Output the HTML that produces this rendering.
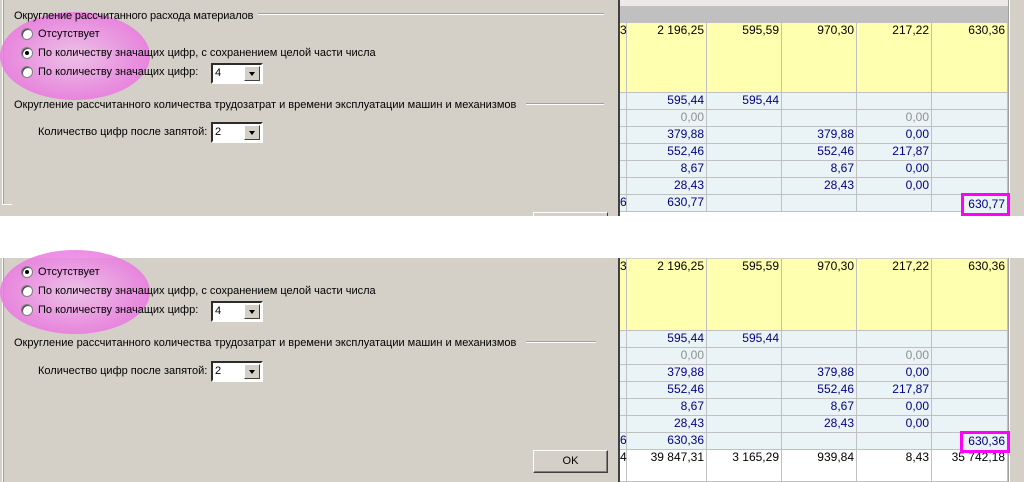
<!DOCTYPE html>
<html><head><meta charset="utf-8"><style>
*{margin:0;padding:0;box-sizing:border-box}
body{width:1024px;height:482px;background:#fff;position:relative;overflow:hidden;font-family:Tahoma,"Liberation Sans","DejaVu Sans",sans-serif;font-size:11px;color:#000}
.a{position:absolute}
.dlg{background:#d4d0c8}
.t{position:absolute;white-space:nowrap;line-height:13px;z-index:2}
.hl{position:absolute;height:2px;border-top:1px solid #a0a0a0;border-bottom:1px solid #fff;z-index:1}
.rad{position:absolute;width:12px;height:12px;border-radius:50%;background:#fff;border:1px solid #808080;box-shadow:inset 1px 1px 0 #404040;z-index:2}
.rad.on::after{content:"";position:absolute;left:3px;top:3px;width:4px;height:4px;border-radius:50%;background:#000}
.cb{position:absolute;width:52px;height:21px;background:#fff;border:2px inset #d4d0c8;border-color:#808080 #fff #fff #808080}
.cb span{position:absolute;left:2px;top:2px;line-height:13px}
.cb i{position:absolute;right:1px;top:1px;width:16px;height:15px;background:#d4d0c8;border:1px solid;border-color:#fff #404040 #404040 #fff}
.cb i::after{content:"";position:absolute;left:4px;top:5px;border-left:3.5px solid transparent;border-right:3.5px solid transparent;border-top:4px solid #000}
.ell{position:absolute;border-radius:50%;background:radial-gradient(ellipse at center,rgba(240,190,235,.85) 0%,rgba(235,120,225,.85) 70%,rgba(230,80,220,.9) 100%)}
.c{position:absolute;border-right:1px solid #c0c0c0;border-bottom:1px solid #c0c0c0;text-align:right;padding-right:2px;line-height:15px;color:#000080;font-family:"Liberation Sans",sans-serif;font-size:12px}
.y{background:#ffffb0;color:#000}
.l{background:#eaf3f5}
.w{background:#fff;color:#000}
.g{color:#909090}
.box{outline:3px solid #ff00ff;outline-offset:-2px;background:#eaf3f5;border:0}
</style></head><body>

<!-- TOP PANEL -->
<div class="a dlg" style="left:0;top:0;width:620px;height:216px"></div>
<div class="a" style="left:618px;top:0;width:2px;height:216px;background:#404040"></div>
<div class="a" style="left:2px;top:0;width:2px;height:205px;border-left:1px solid #fff;border-right:1px solid #a0a0a0"></div>
<div class="a" style="left:2px;top:204px;width:10px;height:1px;background:#fff"></div>
<div class="ell" style="left:0;top:12px;width:150px;height:88px"></div>
<div class="t" style="left:14px;top:10px;letter-spacing:-0.15px">Округление рассчитанного расхода материалов</div>
<div class="hl" style="left:258px;top:13px;width:346px"></div>
<div class="rad" style="left:21px;top:28px"></div><div class="t" style="left:38px;top:28px">Отсутствует</div>
<div class="rad on" style="left:21px;top:47px"></div><div class="t" style="left:38px;top:47px">По количеству значащих цифр, с сохранением целой части числа</div>
<div class="rad" style="left:21px;top:66px"></div><div class="t" style="left:38px;top:66px">По количеству значащих цифр:</div>
<div class="cb" style="left:211px;top:63px"><span>4</span><i></i></div>
<div class="t" style="left:14px;top:99px">Округление рассчитанного количества трудозатрат и времени эксплуатации машин и механизмов</div>
<div class="hl" style="left:526px;top:103px;width:78px"></div>
<div class="t" style="left:38px;top:126px">Количество цифр после запятой:</div>
<div class="cb" style="left:211px;top:122px"><span>2</span><i></i></div>
<div class="a" style="left:533px;top:212px;width:75px;height:4px;border-top:1px solid #fff;border-left:1px solid #fff;border-right:1px solid #404040"></div>

<!-- top grid -->
<div class="a" style="left:620px;top:0;width:404px;height:216px;background:#d4d0c8"></div>
<div class="a" style="left:620px;top:0;width:388px;height:6px;background:#ece9e6"></div>
<div class="a" style="left:620px;top:6px;width:388px;height:17px;background:#c0c0c0"></div>
<div class="a" style="left:1008px;top:0;width:2px;height:216px;background:#fff;border-left:1px solid #a0a0a0"></div>

<!-- BOTTOM PANEL -->
<div class="a dlg" style="left:0;top:258px;width:620px;height:224px"></div>
<div class="a" style="left:618px;top:258px;width:2px;height:224px;background:#404040"></div>
<div class="a" style="left:2px;top:258px;width:2px;height:224px;border-left:1px solid #fff;border-right:1px solid #a0a0a0"></div>
<div class="ell" style="left:0;top:250px;width:150px;height:84px"></div>
<div class="rad on" style="left:21px;top:266px"></div><div class="t" style="left:38px;top:266px">Отсутствует</div>
<div class="rad" style="left:21px;top:285px"></div><div class="t" style="left:38px;top:285px">По количеству значащих цифр, с сохранением целой части числа</div>
<div class="rad" style="left:21px;top:304px"></div><div class="t" style="left:38px;top:304px">По количеству значащих цифр:</div>
<div class="cb" style="left:211px;top:301px"><span>4</span><i></i></div>
<div class="t" style="left:14px;top:337px">Округление рассчитанного количества трудозатрат и времени эксплуатации машин и механизмов</div>
<div class="hl" style="left:526px;top:341px;width:70px"></div>
<div class="t" style="left:38px;top:365px">Количество цифр после запятой:</div>
<div class="cb" style="left:211px;top:361px"><span>2</span><i></i></div>
<div class="a" style="left:533px;top:450px;width:75px;height:23px;border:1px solid;border-color:#fff #404040 #404040 #fff;box-shadow:inset -1px -1px 0 #808080;text-align:center;line-height:21px">OK</div>

<div class="a" style="left:620px;top:258px;width:404px;height:224px;background:#d4d0c8"></div>
<div class="a" style="left:1008px;top:258px;width:2px;height:224px;background:#fff;border-left:1px solid #a0a0a0"></div>

<!-- top cells -->
<div class="c y" style="left:620px;top:23px;width:7px;height:70px">3</div>
<div class="c y" style="left:627px;top:23px;width:80px;height:70px">2 196,25</div>
<div class="c y" style="left:707px;top:23px;width:75px;height:70px">595,59</div>
<div class="c y" style="left:782px;top:23px;width:75px;height:70px">970,30</div>
<div class="c y" style="left:857px;top:23px;width:75px;height:70px">217,22</div>
<div class="c y" style="left:932px;top:23px;width:76px;height:70px">630,36</div>

<div class="c l" style="left:620px;top:93px;width:7px;height:17px"></div><div class="c l" style="left:627px;top:93px;width:80px;height:17px">595,44</div><div class="c l" style="left:707px;top:93px;width:75px;height:17px">595,44</div><div class="c l" style="left:782px;top:93px;width:75px;height:17px"></div><div class="c l" style="left:857px;top:93px;width:75px;height:17px"></div><div class="c l" style="left:932px;top:93px;width:76px;height:17px"></div>
<div class="c l" style="left:620px;top:110px;width:7px;height:17px"></div><div class="c l g" style="left:627px;top:110px;width:80px;height:17px">0,00</div><div class="c l" style="left:707px;top:110px;width:75px;height:17px"></div><div class="c l" style="left:782px;top:110px;width:75px;height:17px"></div><div class="c l g" style="left:857px;top:110px;width:75px;height:17px">0,00</div><div class="c l" style="left:932px;top:110px;width:76px;height:17px"></div>
<div class="c l" style="left:620px;top:127px;width:7px;height:17px"></div><div class="c l" style="left:627px;top:127px;width:80px;height:17px">379,88</div><div class="c l" style="left:707px;top:127px;width:75px;height:17px"></div><div class="c l" style="left:782px;top:127px;width:75px;height:17px">379,88</div><div class="c l" style="left:857px;top:127px;width:75px;height:17px">0,00</div><div class="c l" style="left:932px;top:127px;width:76px;height:17px"></div>
<div class="c l" style="left:620px;top:144px;width:7px;height:17px"></div><div class="c l" style="left:627px;top:144px;width:80px;height:17px">552,46</div><div class="c l" style="left:707px;top:144px;width:75px;height:17px"></div><div class="c l" style="left:782px;top:144px;width:75px;height:17px">552,46</div><div class="c l" style="left:857px;top:144px;width:75px;height:17px">217,87</div><div class="c l" style="left:932px;top:144px;width:76px;height:17px"></div>
<div class="c l" style="left:620px;top:161px;width:7px;height:17px"></div><div class="c l" style="left:627px;top:161px;width:80px;height:17px">8,67</div><div class="c l" style="left:707px;top:161px;width:75px;height:17px"></div><div class="c l" style="left:782px;top:161px;width:75px;height:17px">8,67</div><div class="c l" style="left:857px;top:161px;width:75px;height:17px">0,00</div><div class="c l" style="left:932px;top:161px;width:76px;height:17px"></div>
<div class="c l" style="left:620px;top:178px;width:7px;height:17px"></div><div class="c l" style="left:627px;top:178px;width:80px;height:17px">28,43</div><div class="c l" style="left:707px;top:178px;width:75px;height:17px"></div><div class="c l" style="left:782px;top:178px;width:75px;height:17px">28,43</div><div class="c l" style="left:857px;top:178px;width:75px;height:17px">0,00</div><div class="c l" style="left:932px;top:178px;width:76px;height:17px"></div>
<div class="c l" style="left:620px;top:195px;width:7px;height:17px">6</div><div class="c l" style="left:627px;top:195px;width:80px;height:17px">630,77</div><div class="c l" style="left:707px;top:195px;width:75px;height:17px"></div><div class="c l" style="left:782px;top:195px;width:75px;height:17px"></div><div class="c l" style="left:857px;top:195px;width:75px;height:17px"></div><div class="c l" style="left:932px;top:195px;width:76px;height:17px"></div>
<div class="c w" style="left:620px;top:212px;width:388px;height:4px;border:0"></div>
<div class="c box" style="left:962px;top:194px;width:47px;height:21px;line-height:20px;padding-right:4px">630,77</div>

<!-- bottom cells -->
<div class="c y" style="left:620px;top:259px;width:7px;height:72px">3</div>
<div class="c y" style="left:627px;top:259px;width:80px;height:72px">2 196,25</div>
<div class="c y" style="left:707px;top:259px;width:75px;height:72px">595,59</div>
<div class="c y" style="left:782px;top:259px;width:75px;height:72px">970,30</div>
<div class="c y" style="left:857px;top:259px;width:75px;height:72px">217,22</div>
<div class="c y" style="left:932px;top:259px;width:76px;height:72px">630,36</div>

<div class="c l" style="left:620px;top:331px;width:7px;height:17px"></div><div class="c l" style="left:627px;top:331px;width:80px;height:17px">595,44</div><div class="c l" style="left:707px;top:331px;width:75px;height:17px">595,44</div><div class="c l" style="left:782px;top:331px;width:75px;height:17px"></div><div class="c l" style="left:857px;top:331px;width:75px;height:17px"></div><div class="c l" style="left:932px;top:331px;width:76px;height:17px"></div>
<div class="c l" style="left:620px;top:348px;width:7px;height:17px"></div><div class="c l g" style="left:627px;top:348px;width:80px;height:17px">0,00</div><div class="c l" style="left:707px;top:348px;width:75px;height:17px"></div><div class="c l" style="left:782px;top:348px;width:75px;height:17px"></div><div class="c l g" style="left:857px;top:348px;width:75px;height:17px">0,00</div><div class="c l" style="left:932px;top:348px;width:76px;height:17px"></div>
<div class="c l" style="left:620px;top:365px;width:7px;height:17px"></div><div class="c l" style="left:627px;top:365px;width:80px;height:17px">379,88</div><div class="c l" style="left:707px;top:365px;width:75px;height:17px"></div><div class="c l" style="left:782px;top:365px;width:75px;height:17px">379,88</div><div class="c l" style="left:857px;top:365px;width:75px;height:17px">0,00</div><div class="c l" style="left:932px;top:365px;width:76px;height:17px"></div>
<div class="c l" style="left:620px;top:382px;width:7px;height:17px"></div><div class="c l" style="left:627px;top:382px;width:80px;height:17px">552,46</div><div class="c l" style="left:707px;top:382px;width:75px;height:17px"></div><div class="c l" style="left:782px;top:382px;width:75px;height:17px">552,46</div><div class="c l" style="left:857px;top:382px;width:75px;height:17px">217,87</div><div class="c l" style="left:932px;top:382px;width:76px;height:17px"></div>
<div class="c l" style="left:620px;top:399px;width:7px;height:17px"></div><div class="c l" style="left:627px;top:399px;width:80px;height:17px">8,67</div><div class="c l" style="left:707px;top:399px;width:75px;height:17px"></div><div class="c l" style="left:782px;top:399px;width:75px;height:17px">8,67</div><div class="c l" style="left:857px;top:399px;width:75px;height:17px">0,00</div><div class="c l" style="left:932px;top:399px;width:76px;height:17px"></div>
<div class="c l" style="left:620px;top:416px;width:7px;height:17px"></div><div class="c l" style="left:627px;top:416px;width:80px;height:17px">28,43</div><div class="c l" style="left:707px;top:416px;width:75px;height:17px"></div><div class="c l" style="left:782px;top:416px;width:75px;height:17px">28,43</div><div class="c l" style="left:857px;top:416px;width:75px;height:17px">0,00</div><div class="c l" style="left:932px;top:416px;width:76px;height:17px"></div>
<div class="c l" style="left:620px;top:433px;width:7px;height:17px">6</div><div class="c l" style="left:627px;top:433px;width:80px;height:17px">630,36</div><div class="c l" style="left:707px;top:433px;width:75px;height:17px"></div><div class="c l" style="left:782px;top:433px;width:75px;height:17px"></div><div class="c l" style="left:857px;top:433px;width:75px;height:17px"></div><div class="c l" style="left:932px;top:433px;width:76px;height:17px"></div>
<div class="c w" style="left:620px;top:450px;width:7px;height:32px">4</div><div class="c w" style="left:627px;top:450px;width:80px;height:32px">39 847,31</div><div class="c w" style="left:707px;top:450px;width:75px;height:32px">3 165,29</div><div class="c w" style="left:782px;top:450px;width:75px;height:32px">939,84</div><div class="c w" style="left:857px;top:450px;width:75px;height:32px">8,43</div><div class="c w" style="left:932px;top:450px;width:76px;height:32px">35 742,18</div>
<div class="c box" style="left:961px;top:432px;width:48px;height:20px;line-height:18px;padding-right:4px">630,36</div>

</body></html>
